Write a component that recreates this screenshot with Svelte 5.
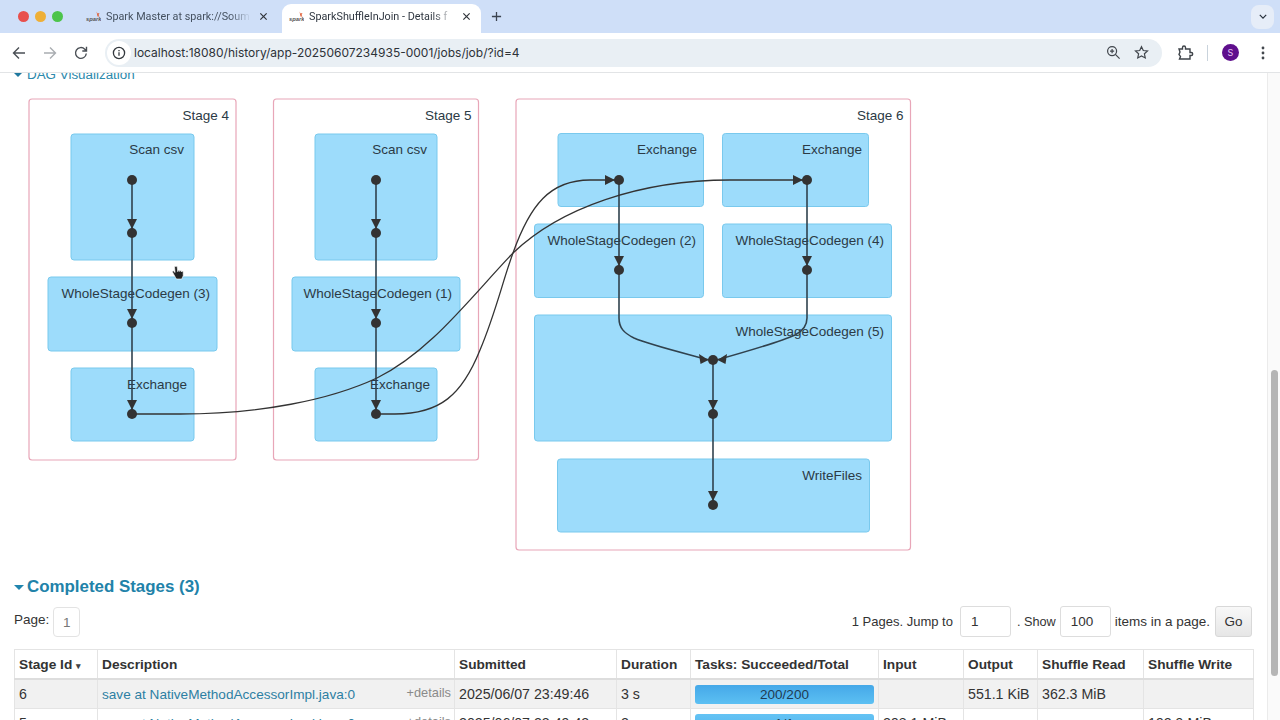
<script>
  const stages = [
    { x: 29, y: 99, w: 207, h: 361, label: 'Stage 4' },
    { x: 273.5, y: 99, w: 205, h: 361, label: 'Stage 5' },
    { x: 516, y: 99, w: 394.5, h: 451, label: 'Stage 6' }
  ];
  const boxes = [
    { x: 71, y: 134, w: 123, h: 126, label: 'Scan csv', tx: 184, ty: 154 },
    { x: 48, y: 277, w: 169, h: 74, label: 'WholeStageCodegen (3)', tx: 210, ty: 298 },
    { x: 71, y: 368, w: 123, h: 73, label: 'Exchange', tx: 187, ty: 389 },
    { x: 315, y: 134, w: 122, h: 126, label: 'Scan csv', tx: 427, ty: 154 },
    { x: 292, y: 277, w: 168, h: 74, label: 'WholeStageCodegen (1)', tx: 452, ty: 298 },
    { x: 315, y: 368, w: 122, h: 73, label: 'Exchange', tx: 430, ty: 389 },
    { x: 558, y: 133.5, w: 145.5, h: 73, label: 'Exchange', tx: 697, ty: 154 },
    { x: 722.5, y: 133.5, w: 146, h: 73, label: 'Exchange', tx: 862, ty: 154 },
    { x: 534.5, y: 224, w: 169, h: 73.5, label: 'WholeStageCodegen (2)', tx: 696, ty: 245 },
    { x: 722.5, y: 224, w: 169, h: 73.5, label: 'WholeStageCodegen (4)', tx: 884, ty: 245 },
    { x: 534.5, y: 315, w: 357, h: 126, label: 'WholeStageCodegen (5)', tx: 884, ty: 336 },
    { x: 557.5, y: 459, w: 312, h: 73, label: 'WriteFiles', tx: 862, ty: 480 }
  ];
  const nodes = [
    [132, 180], [132, 233], [132, 323], [132, 414],
    [376, 180], [376, 233], [376, 323], [376, 414],
    [619, 180], [619, 270], [807, 180], [807, 270],
    [713, 360], [713, 414], [713, 505]
  ];
  const verticals = [
    'M132 180V414', 'M376 180V414',
    'M619 180V318C619 328 624 333 634 338C650 345 680 352 713 361',
    'M807 180V318C807 326 803 331 795 335C780 342 745 352 713 361',
    'M713 360V505'
  ];
  const curves = [
    'M132 414H180C260 414 330 400 377 378C430 352 470 298 513 253C560 208 640 180 730 180H807',
    'M376 414H395C440 414 462 395 480 350C495 315 503 280 513 253C530 205 550 180 590 180H619'
  ];
  const arrows = [
    [132, 233, 'd'], [132, 323, 'd'], [132, 414, 'd'],
    [376, 233, 'd'], [376, 323, 'd'], [376, 414, 'd'],
    [619, 270, 'd'], [807, 270, 'd'], [713, 414, 'd'], [713, 505, 'd'],
    [619, 180, 'r'], [807, 180, 'r']
  ];
  function arrowPoints(x, y, d) {
    if (d === 'd') return `${x - 5},${y - 14} ${x + 5},${y - 14} ${x},${y - 4}`;
    return `${x - 14},${y - 5} ${x - 14},${y + 5} ${x - 4},${y}`;
  }
  const columns = [
    { name: 'Stage Id', w: 83 }, { name: 'Description', w: 357 }, { name: 'Submitted', w: 162 },
    { name: 'Duration', w: 74 }, { name: 'Tasks: Succeeded/Total', w: 188 }, { name: 'Input', w: 85 },
    { name: 'Output', w: 74 }, { name: 'Shuffle Read', w: 106 }, { name: 'Shuffle Write', w: 110 }
  ];
  const rows = [
    { id: '6', submitted: '2025/06/07 23:49:46', dur: '3 s', tasks: '200/200', input: '', output: '551.1 KiB', read: '362.3 MiB', write: '' },
    { id: '5', submitted: '2025/06/07 23:49:43', dur: '2 s', tasks: '1/1', input: '298.1 MiB', output: '', read: '', write: '192.9 MiB' }
  ];
</script>

<div class="window">
  <header class="tabstrip">
    <div class="lights">
      <span class="light red"></span><span class="light amber"></span><span class="light green"></span>
    </div>
    <div class="tab">
      <svg class="favicon" viewBox="0 0 15 12"><text x="0" y="10" class="spark">spark</text><path d="M10.500 .5l1 2 2-.4-1 1.900 1 1.600-2 0z" fill="#e0603a"/></svg>
      <span class="tabtitle">Spark Master at spark://Soum</span>
      <svg class="close" viewBox="0 0 10 10"><path d="M1.500 1.500l7 7M8.500 1.500l-7 7"/></svg>
    </div>
    <div class="tab active">
      <svg class="favicon" viewBox="0 0 15 12"><text x="0" y="10" class="spark">spark</text><path d="M10.500 .5l1 2 2-.4-1 1.900 1 1.600-2 0z" fill="#e0603a"/></svg>
      <span class="tabtitle">SparkShuffleInJoin - Details f</span>
      <svg class="close" viewBox="0 0 10 10"><path d="M1.500 1.500l7 7M8.500 1.500l-7 7"/></svg>
    </div>
    <svg class="newtab" viewBox="0 0 12 12"><path d="M6 1v10M1 6h10"/></svg>
    <div class="spacer"></div>
    <div class="tabmenu">
      <svg viewBox="0 0 10 6"><path d="M1 1l4 4 4-4"/></svg>
    </div>
  </header>

  <nav class="toolbar">
    <svg class="navicon" viewBox="0 0 16 16"><path d="M14 8H2.500M8 2.500L2.500 8 8 13.500"/></svg>
    <svg class="navicon off" viewBox="0 0 16 16"><path d="M2 8h11.500M8 2.500L13.500 8 8 13.500"/></svg>
    <svg class="navicon" viewBox="0 0 16 16"><path d="M13.300 8.500A5.400 5.400 0 1 1 11.800 4.200L13.500 6M13.500 1.800V6H9.300"/></svg>
    <div class="omnibox">
      <span class="infowrap">
        <svg class="info" viewBox="0 0 14 14"><circle cx="7" cy="7" r="5.600"/><path d="M7 6.200v3.600M7 4v1.200"/></svg>
      </span>
      <span class="url">localhost:18080/history/app-20250607234935-0001/jobs/job/?id=4</span>
      <svg class="omniicon zoomicon" viewBox="0 0 16 16"><circle cx="6.500" cy="6.500" r="4.800"/><path d="M10 10l4.500 4.500M6.500 4.300v4.400M4.300 6.500h4.400"/></svg>
      <svg class="omniicon star" viewBox="0 0 16 16"><path d="M8 1.800l1.900 4.100 4.500.5-3.300 3 .9 4.400L8 11.600l-4 2.200.9-4.400-3.300-3 4.500-.5z"/></svg>
    </div>
    <svg class="puzzle" viewBox="0 0 18 18"><path d="M3 5h3.500V3.500a1.500 1.500 0 0 1 3 0V5H14v3.500h1.200a1.500 1.500 0 0 1 0 3H14V15H3.500L4.500 12.500 3 10.500 4 8z"/></svg>
    <span class="divider"></span>
    <span class="avatar">S</span>
    <svg class="kebab" viewBox="0 0 4 16"><circle cx="2" cy="3" r="1.400"/><circle cx="2" cy="8" r="1.400"/><circle cx="2" cy="13" r="1.400"/></svg>
  </nav>

  <div class="viewport">
    <main class="page">
      <div class="dagtitle"><span class="caret small"></span>DAG Visualization</div>

      <svg class="dag" viewBox="0 73 1266 492" width="1266" height="492">
        {#each stages as s}
          <rect class="cluster" x={s.x} y={s.y} width={s.w} height={s.h} rx="3" />
          <text class="label" x={s.x + s.w - 7} y="120" text-anchor="end">{s.label}</text>
        {/each}
        {#each boxes as b}
          <rect class="box" x={b.x} y={b.y} width={b.w} height={b.h} rx="3" />
          <text class="label" x={b.tx} y={b.ty} text-anchor="end">{b.label}</text>
        {/each}
        {#each verticals as d}
          <path class="edge thick" {d} />
        {/each}
        {#each curves as d}
          <path class="edge" {d} />
        {/each}
        {#each arrows as [x, y, dir]}
          <polygon class="arrow" points={arrowPoints(x, y, dir)} />
        {/each}
        <polygon class="arrow" points="699,354 708.500,360 700.500,364" />
        <polygon class="arrow" points="727,354 717.500,360 725.500,364" />
        {#each nodes as [x, y]}
          <circle class="node" cx={x} cy={y} r="5" />
        {/each}
        <path class="cursor" d="M174.500 266.500l.6 6-1.900-1.700-.9.900 3.200 5.800 1 1.500h5.200l1.500-3.200v-4.300l-1.300-.5-.3 1-.5-1.600-1.100.2-.2 1-.6-1.500-1.100.3-.3 1.400-.7-5.500z" />
      </svg>

      <h4 class="sectiontitle"><span class="caret"></span>Completed Stages (3)</h4>

      <div class="paging">
        <div class="pageleft">
          <span class="pagelabel">Page:</span>
          <span class="pagebtn">1</span>
        </div>
        <div class="pageright">
          <span class="jump">1 Pages. Jump to</span>
          <span class="field">1</span>
          <span class="show">. Show</span>
          <span class="field">100</span>
          <span>items in a page.</span>
          <span class="go">Go</span>
        </div>
      </div>

      <table class="stages">
        <colgroup>
          {#each columns as c}
            <col style="width: {c.w}px" />
          {/each}
        </colgroup>
        <thead>
          <tr>
            {#each columns as c, i}
              <th>{c.name}{#if i === 0}<span class="sorted">▾</span>{/if}</th>
            {/each}
          </tr>
        </thead>
        <tbody>
          {#each rows as r, i}
            <tr class:shade={i === 0}>
              <td>{r.id}</td>
              <td class="desc">
                <span class="link">save at NativeMethodAccessorImpl.java:0</span>
                <span class="details">+details</span>
              </td>
              <td>{r.submitted}</td>
              <td>{r.dur}</td>
              <td class="taskcell"><div class="bar" class:light-bar={i === 1}>{r.tasks}</div></td>
              <td>{r.input}</td>
              <td>{r.output}</td>
              <td>{r.read}</td>
              <td>{r.write}</td>
            </tr>
          {/each}
        </tbody>
      </table>
    </main>
    <aside class="scrollbar"><div class="thumb"></div></aside>
  </div>
</div>

<style>
  :global(body) { margin: 0; background: #fff; }
  .window {
    width: 1280px; height: 720px; overflow: hidden; display: flex; flex-direction: column;
    font-family: "Liberation Sans", Arial, sans-serif; color: #2b2b2b; background: #fff;
  }
  .tabstrip {
    height: 33px; flex: none; display: flex; align-items: flex-end; background: #cfdff8;
    box-sizing: border-box; position: relative;
  }
  .lights { display: flex; gap: 6px; width: 83px; padding-left: 17.500px; box-sizing: border-box; align-self: center; }
  .light { width: 11px; height: 11px; border-radius: 50%; }
  .red { background: #e8504d; }
  .amber { background: #eeaf37; }
  .green { background: #4dc44b; }
  .tab {
    width: 199px; height: 29px; display: flex; align-items: center; box-sizing: border-box; padding: 0 14px 4px 3px;
    font: 10.800px Roboto, "Noto Sans", sans-serif; color: #44505f;
  }
  .tab.active { background: #fff; border-radius: 9px 9px 0 0; color: #2f3640; padding: 0 10px 4px 7px; }
  .favicon { width: 15px; height: 12px; flex: none; margin-right: 5px; }
  .spark { font: italic bold 5.800px "Liberation Sans", sans-serif; fill: #555; }
  .tabtitle {
    flex: 1; white-space: nowrap; min-width: 0;
    -webkit-mask-image: linear-gradient(90deg, #000 85%, transparent);
    mask-image: linear-gradient(90deg, #000 85%, transparent);
  }
  .close { width: 9px; height: 9px; flex: none; margin-left: 8px; stroke: #30343a; stroke-width: 1.300; fill: none; }
  .newtab { width: 11px; height: 11px; flex: none; margin: 0 0 11px 10px; stroke: #3b4350; stroke-width: 1.400; fill: none; }
  .spacer { flex: 1; }
  .tabmenu {
    width: 23px; height: 24px; margin: 0 6px 0 0; align-self: center; background: #e6edf8; border-radius: 8px;
    display: flex; align-items: center; justify-content: center;
  }
  .tabmenu svg { width: 8px; height: 5px; stroke: #27303c; stroke-width: 1.500; fill: none; }

  .toolbar {
    height: 40px; flex: none; display: flex; align-items: center; background: #fff; box-sizing: border-box;
    border-bottom: 1px solid #e2e4e6; border-radius: 9px 9px 0 0; padding-left: 11px;
  }
  .navicon { width: 16px; height: 16px; flex: none; margin-right: 15px; stroke: #4a4f55; stroke-width: 1.400; fill: none; }
  .navicon.off { stroke: #a9adb1; }
  .omnibox {
    width: 1057px; height: 28px; flex: none; margin-left: 1px; background: #e9eff4; border-radius: 14px; display: flex; align-items: center; box-sizing: border-box;
  }
  .infowrap { width: 24px; height: 24px; margin-left: 2px; border-radius: 50%; background: #fff; display: flex; align-items: center; justify-content: center; flex: none; }
  .info { width: 14px; height: 14px; stroke: #33383d; stroke-width: 1.300; fill: none; }
  .url { font: 12px/14px Inter, "Noto Sans", sans-serif; color: #2d3238; margin: 1px 0 0 3px; flex: 1; white-space: nowrap; }
  .omniicon { width: 15px; height: 15px; flex: none; stroke: #41464c; stroke-width: 1.300; fill: none; }
  .zoomicon { margin-left: 1px; }
  .star { margin: 0 13px 0 13px; }
  .puzzle { width: 18px; height: 18px; flex: none; margin-left: 14px; stroke: #3e4349; stroke-width: 1.400; fill: none; }
  .divider { width: 1px; height: 16px; background: #c9d3dc; margin: 0 14px 0 13px; flex: none; }
  .avatar {
    width: 17px; height: 17px; border-radius: 50%; background: #5f0f8d; color: #e7c4f4; flex: none;
    font: 9px Inter, sans-serif; display: flex; align-items: center; justify-content: center;
  }
  .kebab { width: 4px; height: 16px; flex: none; margin-left: 22px; fill: #43484e; }

  .viewport { flex: 1; min-height: 0; display: flex; overflow: hidden; }
  .page { width: 1267px; flex: none; }
  .dagtitle {
    height: 0; position: relative; top: -6px; padding-left: 14px; font-size: 13.400px; color: #2b89ac; white-space: nowrap;
  }
  .caret {
    display: inline-block; width: 0; height: 0; border: 5px solid transparent; border-top: 5px solid #2185ae; border-bottom: 0;
    margin-right: 3px; vertical-align: middle;
  }
  .caret.small { border-width: 4.500px 4px 0; border-top-color: #20799f; margin-right: 5px; }
  .dag { display: block; }
  .cluster { fill: #fff; stroke: #e8a6b8; stroke-width: 1.200; }
  .box { fill: #9ddcfb; stroke: #79c9ed; stroke-width: 1; }
  .label { font: 13.500px "Liberation Sans", Arial, sans-serif; fill: #2b3a45; }
  .edge { fill: none; stroke: #333; stroke-width: 1.300; }
  .edge.thick { stroke: #30424e; stroke-width: 1.600; }
  .arrow, .node { fill: #333; }
  .cursor { fill: #222; stroke: #fff; stroke-width: 0.600; }
  .sectiontitle {
    margin: 12px 0 0 14px; font-size: 16.900px; line-height: 20px; font-weight: 700; color: #2182a9;
  }
  .paging { display: flex; justify-content: space-between; align-items: center; margin: 9px 15px 0 14px; font-size: 13.500px; height: 31px; color: #333; }
  .pageleft { display: flex; align-items: center; gap: 4px; }
  .pagelabel { margin-top: -5px; }
  .pageright { display: flex; align-items: center; gap: 4px; }
  .jump { margin-right: 3px; font-size: 13px; }
  .show { margin-left: 2px; font-size: 12.700px; }
  .pagebtn {
    width: 27px; height: 30px; border: 1px solid #e3e3e3; border-radius: 4px; display: flex; align-items: center; justify-content: center; color: #777; margin-top: 1px; box-sizing: border-box;
  }
  .field {
    width: 51px; height: 31px; box-sizing: border-box; border: 1px solid #ddd; border-radius: 3px; display: flex; align-items: center; padding-left: 10px; background: #fff;
  }
  .go {
    width: 37px; height: 31px; box-sizing: border-box; display: flex; align-items: center; justify-content: center; border: 1px solid #d8d8d8; border-radius: 3px; background: linear-gradient(#f8f8f8, #e6e6e6); margin-left: 1px;
  }
  .stages {
    border-collapse: collapse; table-layout: fixed; width: 1239px; margin: 12px 0 0 14px; font-size: 13.700px; color: #333;
  }
  .stages th, .stages td { border: 1px solid #e4e4e4; padding: 0 4px; text-align: left; white-space: nowrap; overflow: hidden; }
  .stages th { height: 28px; font-weight: 700; border-bottom: 2px solid #ddd; }
  .stages td { height: 28px; font-size: 14.200px; }
  .sorted { font-size: 9px; margin-left: 4px; color: #444; }
  .shade td { background: #f1f1f1; }
  .desc { position: relative; }
  .desc .link { font-size: 13.600px; color: #2d7fa3; }
  .details { position: absolute; right: 3px; top: 5px; font-size: 12.800px; color: #8a8a8a; }
  .stages .taskcell { padding: 0 4px; }
  .bar {
    height: 19px; line-height: 19px; border-radius: 3px; text-align: center; color: #1f3b52;
    background: linear-gradient(#45a8e8, #5cc0f3); font-size: 13.500px;
  }
  .bar.light-bar { background: linear-gradient(#64c3f4, #50b4ee); }
  .scrollbar { width: 13px; flex: none; background: #fafafa; border-left: 1px solid #ebebeb; box-sizing: border-box; padding: 297px 2px 0 3px; }
  .thumb { height: 306px; background: #b5b5b5; border-radius: 4px; }
</style>
